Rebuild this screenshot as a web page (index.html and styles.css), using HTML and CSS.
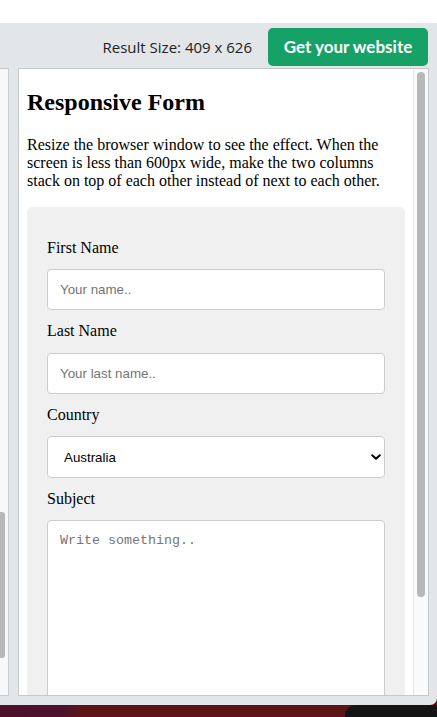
FILE: index.html
```html
<!DOCTYPE html>
<html>
<head>
<meta charset="utf-8">
<title>Responsive Form</title>
<link rel="stylesheet" href="styles.css">
</head>
<body>
<div class="topspace"></div>
<div class="screen">
  <div class="window">
    <div class="toolbar">
      <span class="result-size">Result Size: 409 x 626</span>
      <a class="cta">Get your website</a>
    </div>
    <div class="panes">
      <div class="code-pane"><div class="code-thumb"></div></div>
      <div class="result-pane">
        <div class="doc">
          <h2>Responsive Form</h2>
          <p>Resize the browser window to see the effect. When the screen is less than 600px wide, make the two columns stack on top of each other instead of next to each other.</p>
          <div class="container">
            <form>
              <label for="fname">First Name</label>
              <input type="text" id="fname" placeholder="Your name..">
              <label for="lname">Last Name</label>
              <input type="text" id="lname" placeholder="Your last name..">
              <label for="country">Country</label>
              <div class="select-wrap">
                <select id="country">
                  <option>Australia</option>
                  <option>Canada</option>
                  <option>USA</option>
                </select>
                <svg class="chev" width="10" height="6" viewBox="0 0 10 6"><path d="M1.2 1.2 L5 4.8 L8.8 1.2" fill="none" stroke="#000" stroke-width="1.9" stroke-linecap="round" stroke-linejoin="round"/></svg>
              </div>
              <label for="subject">Subject</label>
              <textarea id="subject" placeholder="Write something.."></textarea>
            </form>
          </div>
        </div>
        <div class="vscroll"><div class="vthumb"></div></div>
      </div>
    </div>
  </div>
  <div class="desktop"><div class="dock"></div></div>
</div>
</body>
</html>
```

FILE: styles.css
```css
html, body {
  margin: 0;
  padding: 0;
}
body {
  width: 437px;
  height: 717px;
  overflow: hidden;
  background: #fff;
}
.topspace {
  height: 23px;
  background: #fff;
}
.screen {
  height: 694px;
  background: linear-gradient(100deg, #4a1020 0px, #4c1230 180px, #5a1517 200px, #5a1517 100%);
  display: flex;
  flex-direction: column;
}
.window {
  height: 682px;
  background: #e3e6e9;
  border-bottom-right-radius: 7px;
  display: flex;
  flex-direction: column;
}
.toolbar {
  height: 45px;
  box-sizing: border-box;
  padding: 5px 9px 0 0;
  display: flex;
  justify-content: flex-end;
  align-items: flex-start;
  gap: 16px;
}
.result-size {
  font-family: "Open Sans", sans-serif;
  font-size: 15px;
  line-height: 38px;
  color: #222;
  white-space: nowrap;
}
.cta {
  height: 38px;
  line-height: 37px;
  width: 160px;
  flex: none;
  box-sizing: border-box;
  text-align: center;
  white-space: nowrap;
  background: #16a166;
  color: #fff;
  border-radius: 5px;
  font-family: Lato, sans-serif;
  font-weight: 700;
  font-size: 17px;
}
.panes {
  height: 628px;
  display: flex;
  gap: 9px;
}
.code-pane {
  width: 8px;
  background: #f8f8f8;
  border: 1px solid #c9cdd1;
  border-left: none;
  height: 626px;
}
.code-thumb {
  margin-top: 443px;
  width: 5px;
  height: 146px;
  background: #b8b8b8;
  border-radius: 0 3px 3px 0;
}
.result-pane {
  width: 409px;
  height: 626px;
  border: 1px solid #c6c9cc;
  background: #fff;
  display: flex;
  overflow: hidden;
}
.doc {
  width: 394px;
  flex: none;
  box-sizing: border-box;
  padding: 0 8px;
  overflow: hidden;
  font-family: "Liberation Serif", "Times New Roman", serif;
  font-size: 16px;
  line-height: 18.4px;
  color: #000;
}
.doc h2 {
  font-size: 24px;
  line-height: 27.6px;
  font-weight: 700;
  margin: 20px 0 19px;
}
.doc p {
  margin: 19px 0 16px;
}
.container {
  background: #f0f0f0;
  border-radius: 5px;
  padding: 20px;
}
form label {
  display: block;
  padding: 12px 12px 12px 0;
  line-height: 18.4px;
}
form input, form select, form textarea {
  display: block;
  width: 100%;
  box-sizing: border-box;
  margin: 0;
  border: 1px solid #ccc;
  border-radius: 4px;
  background: #fff;
  font-family: "Liberation Sans", Arial, sans-serif;
  font-size: 13.333px;
  color: #000;
}
form input {
  height: 41px;
  padding: 0 12px;
}
form input::placeholder, form textarea::placeholder {
  color: #757575;
}
.select-wrap {
  position: relative;
}
form select {
  -webkit-appearance: none;
  appearance: none;
  height: 42px;
  padding: 0 16px;
}
.chev {
  position: absolute;
  right: 4px;
  top: 18px;
}
form textarea {
  height: 200px;
  padding: 12px;
  resize: none;
  font-family: "Liberation Mono", "Courier New", monospace;
}
.vscroll {
  width: 15px;
  flex: none;
  box-sizing: border-box;
  border-left: 1px solid #e6e6e6;
  background: #fafafa;
  padding: 3px 3px 0 3px;
}
.vthumb {
  width: 8px;
  height: 525px;
  border-radius: 4px;
  background: #b8b8b8;
}
.desktop {
  flex: 1;
  display: flex;
  justify-content: flex-end;
}
.dock {
  width: 92px;
  background: #141414;
  border-top-left-radius: 10px;
}
```
